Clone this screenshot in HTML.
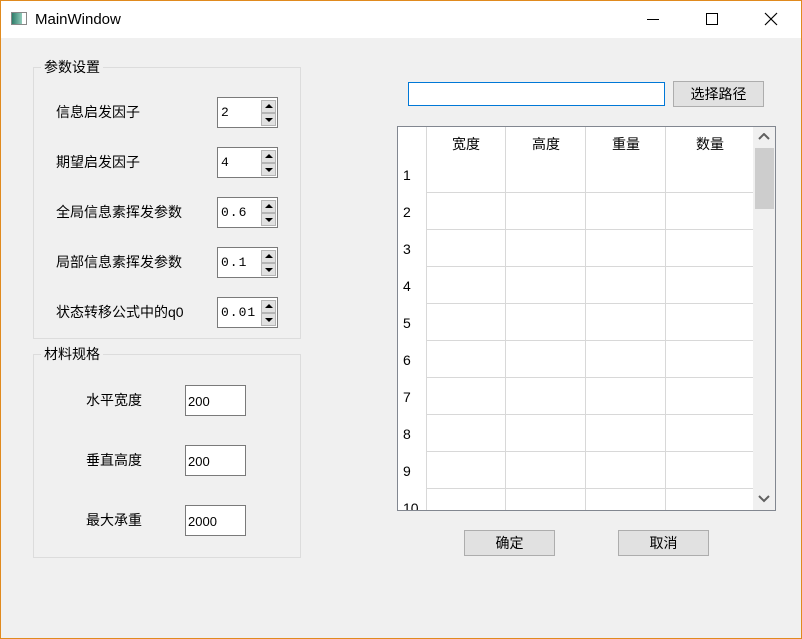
<!DOCTYPE html>
<html><head><meta charset="utf-8"><style>
*{box-sizing:border-box;margin:0;padding:0}
body{width:802px;height:639px;overflow:hidden;background:#f0f0f0;font-family:"Liberation Sans","Noto Sans CJK SC",sans-serif;font-size:14px;color:#000;position:relative}
.frame{position:absolute;left:0;top:0;width:802px;height:639px;border:1px solid #e08a1e;pointer-events:none}
.title{position:absolute;left:0;top:0;width:802px;height:38px;background:#fff}
.abs{position:absolute}
.grp{position:absolute;border:1px solid #dcdcdc}
.gt{position:absolute;background:#f0f0f0;padding:0 3px;font-size:14px;line-height:16px}
.lbl{position:absolute;font-size:14px;line-height:16px}
.spin{position:absolute;width:61px;height:31px;border:1px solid #7a7a7a;background:#fff}
.spin span{position:absolute;left:3px;top:7px;font-family:"Liberation Mono",monospace;font-size:13px;letter-spacing:1px}
.spin .b{position:absolute;right:1px;width:15px;height:13px;background:#e1e1e1;border:1px solid #b5b5b5}
.spin .u{top:2px}.spin .d{top:15px}
.tri-u{position:absolute;left:3px;top:3px;border-left:4px solid transparent;border-right:4px solid transparent;border-bottom:4px solid #000}
.tri-d{position:absolute;left:3px;top:4px;border-left:4px solid transparent;border-right:4px solid transparent;border-top:4px solid #000}
.le{position:absolute;width:61px;height:31px;border:1px solid #7a7a7a;background:#fff;padding:9px 0 0 2px;font-size:13px;line-height:14px}
.btn{position:absolute;height:26px;background:#e1e1e1;border:1px solid #adadad;text-align:center;line-height:24px;font-size:14px}
.tbl{position:absolute;left:397px;top:126px;width:379px;height:385px;border:1px solid #828790;background:#fff;overflow:hidden}
.vl{position:absolute;top:0;width:1px;height:384px;background:#d8d8d8}
.hl{position:absolute;left:28px;width:327px;height:1px;background:#d8d8d8}
.rn{position:absolute;left:5px;font-size:14px}
.hd{position:absolute;top:7px;font-size:14px;text-align:center;width:80px}
</style></head><body>
<div class="title">
 <div class="abs" style="left:11px;top:12px;width:16px;height:13px;border:1px solid #888;background:linear-gradient(90deg,#2e7d6a,#8fc9b9 70%,#fff 70%)"></div>
 <div class="abs" style="left:35px;top:11px;font-size:15px">MainWindow</div>
 <div class="abs" style="left:647px;top:19px;width:12px;height:1px;background:#000"></div>
 <div class="abs" style="left:706px;top:13px;width:12px;height:12px;border:1px solid #000"></div>
 <svg class="abs" style="left:764px;top:12px" width="14" height="14"><path d="M1 1L13 13M13 1L1 13" stroke="#000" stroke-width="1.2"/></svg>
</div>

<div class="grp" style="left:33px;top:67px;width:268px;height:272px"></div>
<div class="gt" style="left:41px;top:59px">参数设置</div>
<div class="lbl" style="left:56px;top:104px">信息启发因子</div>
<div class="lbl" style="left:56px;top:154px">期望启发因子</div>
<div class="lbl" style="left:56px;top:204px">全局信息素挥发参数</div>
<div class="lbl" style="left:56px;top:254px">局部信息素挥发参数</div>
<div class="lbl" style="left:56px;top:304px">状态转移公式中的q0</div>
<div class="spin" style="left:217px;top:97px"><span>2</span><div class="b u"><i class="tri-u"></i></div><div class="b d"><i class="tri-d"></i></div></div>
<div class="spin" style="left:217px;top:147px"><span>4</span><div class="b u"><i class="tri-u"></i></div><div class="b d"><i class="tri-d"></i></div></div>
<div class="spin" style="left:217px;top:197px"><span>0.6</span><div class="b u"><i class="tri-u"></i></div><div class="b d"><i class="tri-d"></i></div></div>
<div class="spin" style="left:217px;top:247px"><span>0.1</span><div class="b u"><i class="tri-u"></i></div><div class="b d"><i class="tri-d"></i></div></div>
<div class="spin" style="left:217px;top:297px"><span>0.01</span><div class="b u"><i class="tri-u"></i></div><div class="b d"><i class="tri-d"></i></div></div>

<div class="grp" style="left:33px;top:354px;width:268px;height:204px"></div>
<div class="gt" style="left:41px;top:346px">材料规格</div>
<div class="lbl" style="left:86px;top:392px">水平宽度</div>
<div class="lbl" style="left:86px;top:452px">垂直高度</div>
<div class="lbl" style="left:86px;top:512px">最大承重</div>
<div class="le" style="left:185px;top:385px">200</div>
<div class="le" style="left:185px;top:445px">200</div>
<div class="le" style="left:185px;top:505px">2000</div>

<div class="abs" style="left:408px;top:82px;width:257px;height:24px;border:1px solid #0078d7;background:#fff"></div>
<div class="btn" style="left:673px;top:81px;width:91px">选择路径</div>

<div class="tbl">
 <div class="vl" style="left:28px"></div><div class="vl" style="left:107px"></div><div class="vl" style="left:187px"></div><div class="vl" style="left:267px"></div>
 <div class="hd" style="left:28px">宽度</div><div class="hd" style="left:108px">高度</div><div class="hd" style="left:188px">重量</div><div class="hd" style="left:272px">数量</div>
 <div class="hl" style="top:65px"></div><div class="hl" style="top:102px"></div><div class="hl" style="top:139px"></div><div class="hl" style="top:176px"></div><div class="hl" style="top:213px"></div><div class="hl" style="top:250px"></div><div class="hl" style="top:287px"></div><div class="hl" style="top:324px"></div><div class="hl" style="top:361px"></div>
 <div class="rn" style="top:40px">1</div><div class="rn" style="top:77px">2</div><div class="rn" style="top:114px">3</div><div class="rn" style="top:151px">4</div><div class="rn" style="top:188px">5</div><div class="rn" style="top:225px">6</div><div class="rn" style="top:262px">7</div><div class="rn" style="top:299px">8</div><div class="rn" style="top:336px">9</div><div class="rn" style="top:373px">10</div>
 <div class="abs" style="left:355px;top:0;width:22px;height:383px;background:#f0f0f0"></div>
 <div class="abs" style="left:357px;top:21px;width:19px;height:61px;background:#cdcdcd"></div>
 <svg class="abs" style="left:360px;top:6px" width="12" height="8"><path d="M1 6L6 1L11 6" stroke="#606060" stroke-width="2" fill="none"/></svg>
 <svg class="abs" style="left:360px;top:368px" width="12" height="8"><path d="M1 1L6 6L11 1" stroke="#606060" stroke-width="2" fill="none"/></svg>
</div>

<div class="btn" style="left:464px;top:530px;width:91px">确定</div>
<div class="btn" style="left:618px;top:530px;width:91px">取消</div>
<div class="frame"></div>
</body></html>
